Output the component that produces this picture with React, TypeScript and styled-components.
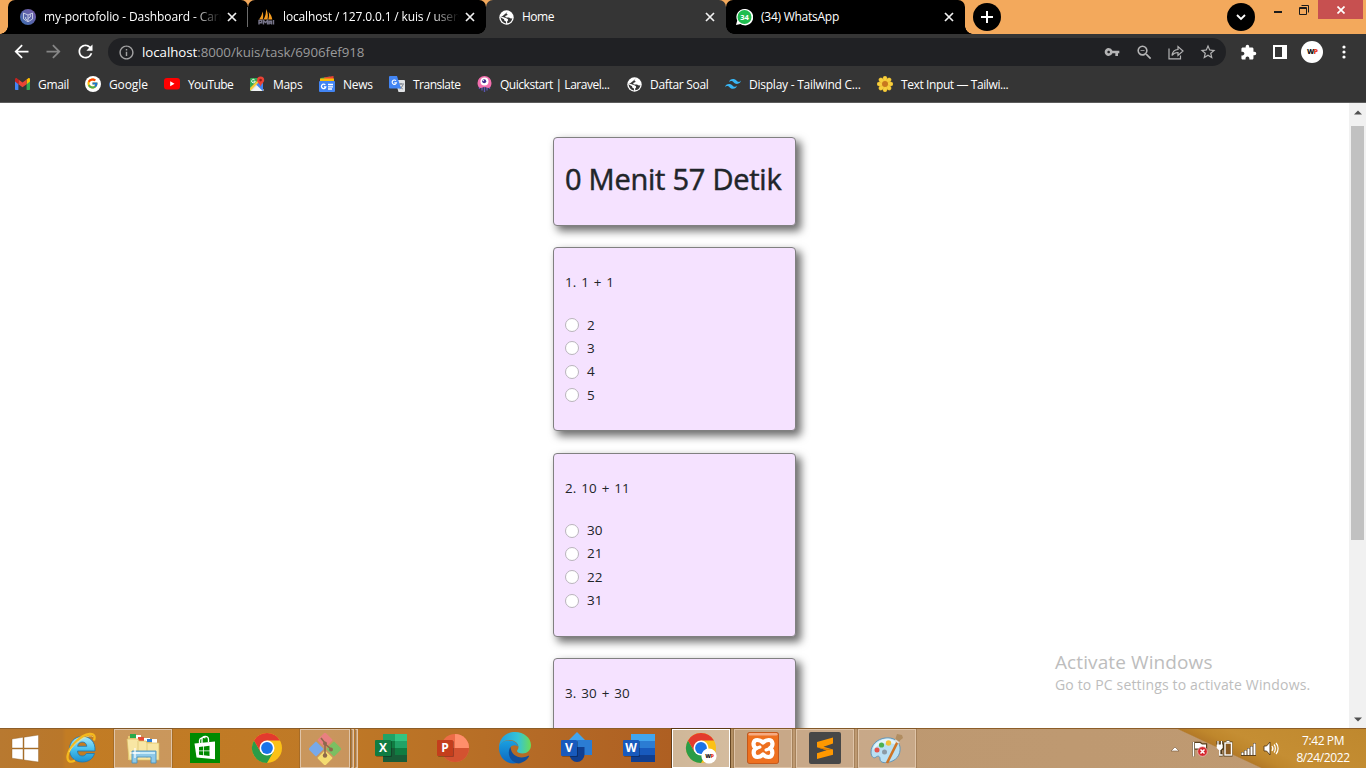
import React from 'react';
import styled, { createGlobalStyle } from 'styled-components';
import { MdArrowBack, MdArrowForward, MdRefresh, MdInfoOutline, MdVpnKey, MdZoomOut, MdStarBorder, MdExtension } from 'react-icons/md';
import { FcGoogle } from 'react-icons/fc';

const GlobalStyle = createGlobalStyle`
  * { box-sizing: border-box; }
  html, body { margin: 0; padding: 0; overflow: hidden; }
  body { font-family: "Open Sans", "Noto Sans", sans-serif; }
  svg { display: block; flex: none; }
`;

const Screen = styled.div`
  width: 1366px;
  height: 768px;
  display: flex;
  flex-direction: column;
  overflow: hidden;
  background: #fff;
`;

/* ---------- tab strip ---------- */
const TabStrip = styled.div`
  height: 34px;
  flex: none;
  display: flex;
  padding-left: 8px;
  background: #f3a95c;
`;

const Tab = styled.div<{ $active?: boolean; $width: number; $start?: number }>`
  position: relative;
  width: ${p => p.$width}px;
  height: 34px;
  display: flex;
  align-items: center;
  padding: 0 11px 0 ${p => p.$start ?? 12}px;
  border-radius: 7px 7px 0 0;
  color: #fff;
  background: ${p => (p.$active ? '#353535' : '#000')};
`;

const Flare = styled.span<{ $side: 'left' | 'right'; $color: string }>`
  position: absolute;
  bottom: 0;
  ${p => p.$side}: -8px;
  width: 8px;
  height: 8px;
  background: radial-gradient(circle at ${p => (p.$side === 'left' ? '0 0' : '100% 0')}, transparent 7.5px, ${p => p.$color} 8px);
  z-index: 1;
`;

const TabDivider = styled.span`
  position: absolute;
  right: 0;
  top: 7px;
  width: 1px;
  height: 20px;
  background: #6b6b6b;
`;

const TabTitle = styled.span<{ $fade?: boolean; $spacing?: number }>`
  flex: 1;
  margin-left: 8px;
  margin-right: 6px;
  overflow: hidden;
  white-space: nowrap;
  font-size: 12px;
  line-height: 18px;
  letter-spacing: ${p => p.$spacing ?? 0}px;
  ${p => p.$fade && 'mask-image: linear-gradient(to right, #000 calc(100% - 28px), transparent);'}
`;

const RoundButton = styled.div<{ $left: number }>`
  width: 28px;
  height: 28px;
  margin: 3px 0 0 ${p => p.$left}px;
  border-radius: 50%;
  background: #000;
  display: flex;
  align-items: center;
  justify-content: center;
`;

const WindowButtons = styled.div`
  display: flex;
  margin-left: 6px;
  height: 19px;
`;

const WindowButton = styled.div<{ $width: number; $close?: boolean }>`
  width: ${p => p.$width}px;
  height: 19px;
  display: flex;
  align-items: center;
  justify-content: center;
  background: ${p => (p.$close ? '#c75050' : 'transparent')};
`;

const RestoreButton = styled(WindowButton)`
  padding-right: 5px;
`;

/* ---------- toolbar ---------- */
const Toolbar = styled.div`
  height: 36px;
  flex: none;
  display: flex;
  align-items: center;
  background: #353535;
`;

const ToolSlot = styled.div<{ $width?: number; $color?: string }>`
  width: ${p => p.$width ?? 32}px;
  height: 28px;
  display: flex;
  align-items: center;
  justify-content: center;
  color: ${p => p.$color ?? '#fff'};
`;

const NavGroup = styled.div`
  display: flex;
  width: 108px;
  padding: 0 0 1px 5.5px;
`;

const Omnibox = styled.div`
  width: 1118px;
  height: 28px;
  display: flex;
  align-items: center;
  padding: 0 2px 0 2px;
  border-radius: 14px;
  background: #202124;
`;

const Address = styled.div`
  flex: 1;
  font-size: 13.3px;
  line-height: 20px;
  letter-spacing: -0.05px;
  color: #9a9a9b;
  b { font-weight: 400; color: #fff; }
`;

const Avatar = styled.div`
  width: 22px;
  height: 22px;
  border-radius: 50%;
  background: #fff;
  display: flex;
  align-items: center;
  justify-content: center;
  font: 800 7px/10px "Open Sans", sans-serif;
  letter-spacing: -0.8px;
  color: #111;
  i { font-style: normal; color: #e8401f; }
`;

/* ---------- bookmarks ---------- */
const Bookmarks = styled.div`
  height: 33px;
  flex: none;
  display: flex;
  align-items: flex-start;
  padding: 5px 0 0 15px;
  background: #353535;
  border-bottom: 1px solid #5c5c5c;
`;

const Bookmark = styled.div<{ $width: number; $spacing?: number }>`
  width: ${p => p.$width}px;
  height: 18px;
  display: flex;
  align-items: center;
  gap: 8px;
  white-space: nowrap;
  font-size: 12px;
  letter-spacing: ${p => p.$spacing ?? -0.1}px;
  color: #fff;
`;

/* ---------- page ---------- */
const PageRow = styled.div`
  position: relative;
  height: 625px;
  flex: none;
  display: flex;
`;

const Page = styled.main`
  flex: 1;
  height: 625px;
  overflow: hidden;
  display: flex;
  flex-direction: column;
  align-items: center;
  gap: 21.6px;
  padding-top: 34.2px;
  color: #212529;
`;

const Card = styled.section<{ $height: number }>`
  width: 243px;
  height: ${p => p.$height}px;
  flex: none;
  padding: 0 11px;
  background: #f5e2ff;
  border: 1px solid #808080;
  border-radius: 4px;
  box-shadow: 4.5px 4.5px 9px #6c6c6c;
`;

const Timer = styled.h1`
  margin: 22px 0 0;
  font-weight: 500;
  font-size: 29px;
  line-height: 38px;
  white-space: nowrap;
  letter-spacing: -0.25px;
  -webkit-text-stroke: 0.5px #212529;
`;

const Question = styled.p`
  margin: 24px 0 20px;
  font-size: 13.4px;
  line-height: 21px;
  letter-spacing: 0.2px;
  word-spacing: 1px;
`;

const Option = styled.label`
  height: 23.35px;
  display: flex;
  align-items: center;
  gap: 8px;
  font-size: 13.5px;
  line-height: 21px;
`;

const Radio = styled.span`
  width: 14px;
  height: 14px;
  border: 1px solid #b9b4bc;
  border-radius: 50%;
  background: #fff;
`;

const Scrollbar = styled.div`
  width: 17px;
  height: 625px;
  display: flex;
  flex-direction: column;
  align-items: center;
  justify-content: space-between;
  padding: 7px 0 6px;
  background: #f1f1f1;
`;

const Thumb = styled.div`
  width: 13px;
  height: 414px;
  margin: 11px 0 auto;
  background: #c1c1c1;
`;

const Watermark = styled.div`
  position: absolute;
  left: 1055px;
  top: 546px;
  white-space: nowrap;
  color: #bdbdbd;
  font-size: 14px;
  line-height: 19px;
  letter-spacing: 0.16px;
`;

const WatermarkTitle = styled.div`
  font-size: 19px;
  line-height: 26px;
  letter-spacing: 0.1px;
`;

/* ---------- taskbar ---------- */
const Taskbar = styled.footer`
  height: 40px;
  flex: none;
  display: flex;
  border-top: 1px solid #8d5e29;
  background:
    linear-gradient(25deg, transparent 0, transparent 31.5%, #b47a28 32.5%, #bf872c 40%, #c58e33 50%, #bf882e 100%) 1175px 0 / 191px 40px no-repeat,
    linear-gradient(90deg, #b87930 0, #b9772a 62px, #c27c24 66px, #bf7926 330px, #b46a26 540px, #ae5f22 671px, #a98553 672px, #bd9870 780px, #bf9a72 1366px);
`;

const StartSlot = styled.div`
  width: 50px;
  display: flex;
  align-items: center;
  justify-content: center;
  padding-right: 1px;
`;

const TaskSlot = styled.div<{ $state?: 'open' | 'active' }>`
  width: 58px;
  height: 39px;
  margin: 0 2px;
  padding-bottom: 1px;
  display: flex;
  align-items: center;
  justify-content: center;
  border: 1px solid transparent;
  ${p => p.$state === 'open' && 'background: rgba(214,190,170,.42); border-color: #dfc4a8; box-shadow: 0 0 0 1px rgba(110,75,40,.3);'}
  ${p => p.$state === 'active' && 'background: rgba(233,216,198,.6); border-color: #fff; box-shadow: 0 0 0 1px rgba(70,40,10,.7);'}
`;

const GroupedSlot = styled.div`
  width: 62px;
  display: flex;
  gap: 1px;
  padding: 0 1px 0 2px;
`;

const GroupLead = styled.div`
  width: 50px;
  height: 39px;
  display: flex;
  align-items: center;
  justify-content: center;
  border: 1px solid #dfc4a8;
  background: rgba(214,190,170,.42);
  box-shadow: 0 0 0 1px rgba(110,75,40,.3);
`;

const GroupEdge = styled.div`
  width: 3px;
  height: 39px;
  border: 1px solid #dfc4a8;
  border-left-color: #a07b50;
  background: #c89d70;
`;

const Tray = styled.div`
  margin-left: auto;
  display: flex;
  align-items: center;
`;

const TraySlot = styled.div<{ $width: number }>`
  width: ${p => p.$width}px;
  display: flex;
  justify-content: center;
`;

const Clock = styled.div`
  width: 83px;
  padding: 1px 3px 0 0;
  text-align: center;
  color: #fff;
  font-size: 12px;
  line-height: 17px;
  letter-spacing: -0.4px;
`;

/* ---------- icons ---------- */
const CloseIcon = () => (
  <svg width="10" height="10" viewBox="0 0 10 10"><path d="M1 1l8 8M9 1L1 9" stroke="#f1f1f1" strokeWidth="1.7" /></svg>
);

const GlobeIcon = () => (
  <svg width="15" height="15" viewBox="0 0 15 15">
    <circle cx="7.5" cy="7.5" r="7.2" fill="#fff" />
    <path d="M8.7 1.7c-1.2.3-1.7 1-1.2 1.9.4.6 1.1.5 1 1.2-.3 1-1.8.5-2.2 1.500-.2.8.4 1.200 1.300 1.200h2.200c1 0 1.400.8 2.100.9.8.1 1.300-.4 1.400-1 .2 2.900-2 5.600-5 5.800l-.2-1.400c0-.7 1.100-.8 1-1.900-.1-1.400-1.500-1.300-2.500-1.900C5.500 7.400 4.600 7.100 1.700 6.700 1.300 10 4 13.300 7.200 13.400l-.4-2.200c-1.500-.1-1.700-1.100-1.700-2L1.800 7.500" fill="#353535" />
  </svg>
);

const PortfolioIcon = () => (
  <svg width="16" height="16" viewBox="0 0 16 16">
    <defs><linearGradient id="pf" x1="1" x2="0" y2="1"><stop stopColor="#7b5aa8" /><stop offset="1" stopColor="#3a6eae" /></linearGradient></defs>
    <circle cx="8" cy="8" r="8" fill="url(#pf)" />
    <path d="M3.500 4l4.500 2 4.500-2v6L8 12.800 3.500 10zM8 6v6.500M5.700 8v2l2.300 1.500M10.300 5v3L8 9.500" fill="none" stroke="#c5cbe3" strokeWidth="1" />
  </svg>
);

const PmaIcon = () => (
  <svg width="17" height="16" viewBox="0 0 17 16">
    <path d="M1 10.500C3 8 4 5.500 4.500 2.500c1 2.500.8 5.500.3 8zM5.500 10.500C7.500 7 8.200 4 8 0c2.200 3.500 2.200 7.500 1.500 10.500zM10.200 10.500c1-2.800 1-5 .5-7.500 2.300 2.500 3.300 5 3.600 7.500z" fill="#f29a1f" />
    <path d="M1 15.500v-4h2.700v2.200H1M5.500 15.500v-4l2 2 2-2v4M11 15.500v-3.200h2.500v3.200M11 14H13.500M15.500 11v4.500" fill="none" stroke="#77758a" strokeWidth="1.400" />
  </svg>
);

const WhatsappIcon = () => (
  <svg width="17" height="17" viewBox="0 0 17 17">
    <path d="M8.500 0A8 8 0 0 0 1.200 11.500L0 16l4.500-1A8.200 8.200 0 1 0 8.500 0z" fill="#fff" />
    <circle cx="8.500" cy="8" r="7" fill="#1fbd4f" />
    <text x="8.500" y="10.800" textAnchor="middle" fontFamily="Open Sans" fontSize="7.500" fontWeight="700" fill="#fff">34</text>
  </svg>
);

const GmailIcon = () => (
  <svg width="15" height="12" viewBox="0 0 15 12">
    <path d="M0 2v9c0 .6.400 1 1 1h2.400V5z" fill="#4285f4" />
    <path d="M15 2v9c0 .6-.4 1-1 1h-2.400V5z" fill="#34a853" />
    <path d="M11.600 1.400L13 .4c.9-.7 2-.1 2 1v2.200l-3.400 2.600z" fill="#fbbc04" />
    <path d="M3.400 1.400L7.500 4.500l4.100-3.100v4.800L7.500 9.200 3.400 6.200z" fill="#ea4335" />
    <path d="M0 1.500C0 .300 1.200-.3 2.100.4l1.300 1v4.800L0 3.600z" fill="#c5221f" />
  </svg>
);

const GoogleIcon = () => (
  <svg width="16" height="16" viewBox="0 0 16 16">
    <circle cx="8" cy="8" r="8" fill="#fff" />
    <FcGoogle x="1.500" y="1.500" width="13" height="13" />
  </svg>
);

const YoutubeIcon = () => (
  <svg width="16" height="12" viewBox="0 0 16 12"><rect width="16" height="11.600" rx="3" fill="#f00" /><path d="M6.200 3.300v5l4.300-2.500z" fill="#fff" /></svg>
);

const MapsIcon = () => (
  <svg width="16" height="16" viewBox="0 0 16 16">
    <rect x="1" y="2" width="13" height="13" rx="1.300" fill="#34a853" />
    <path d="M1 13.700L8 7l7 7-1 1H2.300z" fill="#dfe3e6" />
    <path d="M7 8.500L13.700 15H14V7.500L11 5z" fill="#4285f4" />
    <path d="M1 12L9 4l1.500 1.500L1.500 14.700z" fill="#fcc934" />
    <path d="M2.800 15L8 9.700l5.200 5.300z" fill="#f1f3f4" />
    <path d="M6.300 5.200A1.800 1.800 0 1 1 5.500 3.600M4.500 5.200h1.800" stroke="#fff" fill="none" strokeWidth=".9" />
    <path d="M11.600.5a3.600 3.600 0 0 0-3.600 3.600c0 2.600 3 3.600 3.600 6.900.6-3.300 3.600-4.300 3.600-6.900A3.600 3.600 0 0 0 11.600.5z" fill="#ea4335" />
    <circle cx="11.600" cy="4.100" r="1.300" fill="#8c1d18" />
  </svg>
);

const NewsIcon = () => (
  <svg width="16" height="16" viewBox="0 0 16 16">
    <path d="M1.500 2L11 .5l1 4H2z" fill="#34a853" /><path d="M5 1.500L14.500 0v5H6z" fill="#ea4335" />
    <rect x="1" y="2.500" width="14" height="6" fill="#fbbc04" />
    <rect y="5" width="16" height="11" rx="1" fill="#4285f4" />
    <path d="M6.300 8.900a2.200 2.200 0 1 0 .5 1.900H4.900M9 8.500h5M9 10.800h5M9 13h4" fill="none" stroke="#fff" strokeWidth="1.300" />
  </svg>
);

const TranslateIcon = () => (
  <svg width="16" height="16" viewBox="0 0 16 16">
    <path d="M6 4h9a1 1 0 0 1 1 1v10a1 1 0 0 1-1 1H9.500z" fill="#e0e2e5" />
    <path d="M9 8h6M12 7v1.500M14 8.500c-.5 2-2 3.500-3.500 4.300M10.500 10c.8 1.300 2 2.300 3.300 3" stroke="#6d7580" fill="none" strokeWidth=".9" />
    <path d="M1 0h7l4 12.500H1a1 1 0 0 1-1-1V1a1 1 0 0 1 1-1z" fill="#4285f4" />
    <path d="M7 4.700a2.200 2.200 0 1 0 .5 2H5.300" fill="none" stroke="#fff" strokeWidth="1.100" />
  </svg>
);

const QuickstartIcon = () => (
  <svg width="15" height="16" viewBox="0 0 15 16">
    <path d="M2.500 9v4M5 10v4.500M7.500 10v6M10 10v4.500M12.500 9v4" stroke="#5a55b0" strokeWidth="1.400" />
    <path d="M7.500 0a7 7 0 0 1 7 7c0 3-1.500 5-3.500 5-1 0-1.500-1-3.500-1s-2.500 1-3.500 1C2 12 .5 10 .5 7a7 7 0 0 1 7-7z" fill="#f46fae" />
    <circle cx="7.500" cy="5.500" r="4" fill="#fff" /><circle cx="7.200" cy="5.300" r="2" fill="#3d2c8d" /><circle cx="6.500" cy="4.600" r=".6" fill="#fff" />
  </svg>
);

const TailwindIcon = () => (
  <svg width="16" height="10" viewBox="0 0 16 10">
    <path d="M4 3.300C4.500 1.100 5.900 0 8 0c3.200 0 3.600 2.400 5.200 2.800 1.100.3 2-.1 2.800-1.200-.5 2.200-1.900 3.300-4 3.300-3.200 0-3.600-2.400-5.200-2.800C5.700 1.800 4.800 2.200 4 3.300zM0 8.200C.5 6 1.900 4.900 4 4.900c3.200 0 3.600 2.400 5.200 2.800 1.100.3 2-.1 2.800-1.200-.5 2.200-1.900 3.300-4 3.300-3.200 0-3.600-2.400-5.200-2.800-1.100-.3-2 .1-2.800 1.200z" fill="#38b6f5" />
  </svg>
);

const FlowerIcon = () => (
  <svg width="16" height="16" viewBox="0 0 16 16">
    {[0, 45, 90, 135, 180, 225, 270, 315].map(a => (
      <ellipse key={a} cx="8" cy="3.200" rx="2.200" ry="3.200" fill="#f7cf3e" stroke="#d9a520" strokeWidth=".3" transform={`rotate(${a} 8 8)`} />
    ))}
    <circle cx="8" cy="8" r="3" fill="#c8781f" />
  </svg>
);

const ShareIcon = () => (
  <svg width="16" height="16" viewBox="0 0 16 16" fill="none" stroke="#b4b4b5" strokeWidth="1.200">
    <path d="M1 4.500v10.300h11.500v-3.300" /><path d="M4 11.500c.4-3.700 2.500-5.800 6-6V2.500L15 7l-5 4.500v-3c-2.600 0-4.500.8-6 3z" />
  </svg>
);

const StartIcon = () => (
  <svg width="28" height="28" viewBox="0 0 28 28" fill="#fff" stroke="#8a5a20" strokeWidth=".4">
    <path d="M1 4l11-1.700V13H1zM13 2.200L27.500 0v13H13zM1 14h11v10.800L1 23.200zM13 14h14.500v13L13 25z" />
  </svg>
);

const IeIcon = () => (
  <svg width="32" height="32" viewBox="0 0 32 32">
    <defs><linearGradient id="ie" x2="0" y2="1"><stop stopColor="#a9e8fb" /><stop offset=".5" stopColor="#48c1ee" /><stop offset="1" stopColor="#1b8fd0" /></linearGradient></defs>
    <path d="M30 19H12.500c.2 3.300 2 5 4.700 5 2 0 3.300-.9 4.200-2.500h8.100C27.700 26.800 23.600 30 17.300 30 9.800 30 4.500 25 4.500 17.500S9.700 4.500 17.300 4.500C25 4.500 30.600 9.500 30 19zM12.600 14.300h9.200c-.2-2.700-1.900-4.300-4.500-4.300s-4.300 1.600-4.700 4.300z" fill="url(#ie)" stroke="#1976b5" strokeWidth=".8" />
    <path d="M29 8.500C30.500 4 29 1.500 24.500 2 16 3 5.500 13 3 22c-1.800 6.500 1.500 9.500 7 6.500" fill="none" stroke="#f5b91d" strokeWidth="2.300" />
    <path d="M28 5C26 .8 10 9 4 20" fill="none" stroke="#ffe27a" strokeWidth=".8" />
  </svg>
);

const ExplorerIcon = () => (
  <svg width="34" height="32" viewBox="0 0 34 32">
    <path d="M2 4h10l2 2h6l1 3h10v19H2z" fill="#e8c872" />
    <path d="M4 2h6v4H4z" fill="#28a94b" /><path d="M10 3h5v4h-5z" fill="#fff" />
    <path d="M12 5h6v4h-6z" fill="#e64b34" /><path d="M18 6h6v3h-6z" fill="#fff" />
    <path d="M21 7h5v3h-5z" fill="#2c7ed6" /><path d="M26 7h5v4h-5z" fill="#fff" />
    <path d="M1 7h11l1 2h7l1 2h12v17H3z" fill="#f8e6a4" stroke="#d9bb62" strokeWidth=".7" />
    <path d="M12 9v17M21 11v15" stroke="#e2cb7b" />
    <path d="M6 19h24v12h-5v-6H11v6H6z" fill="#8ec9e8" stroke="#4d93bd" strokeWidth=".9" />
    <path d="M7 20h22v2H7z" fill="#c8ebf8" /><path d="M9 16v10M4 21h10" stroke="#fff" strokeWidth="1.200" />
  </svg>
);

const StoreIcon = () => (
  <svg width="30" height="30" viewBox="0 0 30 30">
    <rect width="30" height="30" fill="#008a00" />
    <path d="M4.500 10.500L25 8.500v17.800L6.500 24.500z" fill="#fff" />
    <path d="M9.500 10V7.500c0-2.500 4-4 6-2.500M12 10V6.500c0-4 6.500-4.500 6.500 0V9" fill="none" stroke="#fff" strokeWidth="1.300" />
    <path d="M9 14l4.200-.5v4H9zM14 13.400l5.500-.6v4.700H14zM9 18.200h4.200v4L9 21.700zM14 18.200h5.500V23l-5.500-.7z" fill="#008a00" />
  </svg>
);

const ChromeIcon = ({ badge }: { badge?: boolean }) => (
  <svg width="32" height="32" viewBox="0 0 32 32">
    <circle cx="16" cy="16" r="15" fill="#fbc116" />
    <path d="M3 8.500a15 15 0 0 0 13 22.500l6.500-11.300L9.500 19.700z" fill="#2a9c48" />
    <path d="M3 8.500A15 15 0 0 1 29 8.500H16L9.500 19.700z" fill="#e33b2e" />
    <circle cx="16" cy="16" r="7.500" fill="#fff" /><circle cx="16" cy="16" r="5.900" fill="#1a73e8" />
    {badge && <>
      <circle cx="24" cy="24" r="7.600" fill="#fff" />
      <text x="20.200" y="26.200" fontFamily="Open Sans" fontSize="5.500" fontWeight="800" fill="#111" letterSpacing="-.5">W<tspan fill="#e8401f">P</tspan></text>
    </>}
  </svg>
);

const GitIcon = () => (
  <svg width="32" height="32" viewBox="0 0 32 32">
    <rect x="10.500" y="1.500" width="11" height="11" rx="1" transform="rotate(45 16 7)" fill="#e98080" />
    <rect x="1.500" y="10.500" width="11" height="11" rx="1" transform="rotate(45 7 16)" fill="#78a9ea" />
    <rect x="19.500" y="10.500" width="11" height="11" rx="1" transform="rotate(45 25 16)" fill="#7bbf62" />
    <rect x="10.500" y="19.500" width="11" height="11" rx="1" transform="rotate(45 16 25)" fill="#f4dc70" />
    <path d="M12 5l4 5v14M16 11l6 5" stroke="#8e684b" strokeWidth="1.600" fill="none" />
    <circle cx="16" cy="10.500" r="2" fill="#8e684b" /><circle cx="22" cy="16.500" r="2" fill="#8e684b" /><circle cx="16" cy="22.500" r="2.200" fill="#8e684b" />
  </svg>
);

const OfficeBadge = ({ letter, color }: { letter: string; color: string }) => (
  <>
    <rect x="1" y="9" width="16" height="16" rx="1" fill="#000" opacity=".25" />
    <rect y="8" width="16" height="16" rx="1" fill={color} />
    <text x="8" y="20.300" textAnchor="middle" fontFamily="Open Sans" fontSize="12" fontWeight="700" fill="#fff">{letter}</text>
  </>
);

const ExcelIcon = () => (
  <svg width="32" height="32" viewBox="0 0 32 32">
    <path d="M8 2h12v7H8z" fill="#21a366" /><path d="M20 2h12v7H20z" fill="#33c481" />
    <path d="M8 9h12v7H8z" fill="#107c41" /><path d="M20 9h12v7H20z" fill="#21a366" />
    <path d="M8 16h12v7H8z" fill="#185c37" /><path d="M20 16h12v7H20z" fill="#107c41" /><path d="M8 23h24v7H8z" fill="#185c37" />
    <OfficeBadge letter="X" color="#107c41" />
  </svg>
);

const PowerpointIcon = () => (
  <svg width="32" height="32" viewBox="0 0 32 32">
    <circle cx="18" cy="16" r="14" fill="#ed6c47" /><path d="M18 2a14 14 0 0 1 14 14H18z" fill="#ff8f6b" /><path d="M4 16a14 14 0 0 0 28 0z" fill="#d35230" />
    <OfficeBadge letter="P" color="#c43e1c" />
  </svg>
);

const VisioIcon = () => (
  <svg width="32" height="32" viewBox="0 0 32 32">
    <path d="M16 0l8 8-8 8-8-8z" fill="#41a5ee" /><rect x="16" y="8" width="15" height="15" fill="#2b7cd3" />
    <path d="M16 15h7.500v7.500a7.500 7.500 0 1 1-7.500-7.500z" fill="#103f91" />
    <OfficeBadge letter="V" color="#185abd" />
  </svg>
);

const WordIcon = () => (
  <svg width="32" height="32" viewBox="0 0 32 32">
    <path d="M8 2h24v7H8z" fill="#41a5ee" /><path d="M8 9h24v7H8z" fill="#2b7cd3" /><path d="M8 16h24v7H8z" fill="#185abd" /><path d="M8 23h24v7H8z" fill="#103f91" />
    <OfficeBadge letter="W" color="#185abd" />
  </svg>
);

const EdgeIcon = () => (
  <svg width="32" height="32" viewBox="0 0 32 32">
    <defs>
      <linearGradient id="e1" x2="1"><stop stopColor="#1f9de0" /><stop offset=".6" stopColor="#35c4d7" /><stop offset="1" stopColor="#6bdc55" /></linearGradient>
      <linearGradient id="e2" x2="0" y2="1"><stop stopColor="#1aa0e0" /><stop offset="1" stopColor="#0d67c0" /></linearGradient>
    </defs>
    <path d="M0 16C0 6 7 0 16 0s16 6 16 13c0 5.500-4 8.500-8.500 8.500-3 0-5.500-1-5.500-2.500 0-1 1.500-1.500 1.500-4C19.500 11 15 8 11 8 5 8 1 11 0 16z" fill="url(#e1)" />
    <path d="M0 16c0-5 5-7.500 10-7.500 5.500 0 9 3 9.300 6.500-1-2-6-3-8 .5-3 5-.5 12 7.200 15.500C8 33.500 0 26 0 16z" fill="url(#e2)" />
    <path d="M11.500 15c-4 6-1 15 8 16.500 5-.7 8.500-3.500 10.500-7 .3-.8-.2-1-.8-.7-8 4-17 .2-17.700-8.800z" fill="#114f9c" />
  </svg>
);

const XamppIcon = () => (
  <svg width="32" height="32" viewBox="0 0 32 32">
    <rect width="32" height="32" rx="3" fill="#b9521a" />
    <rect x=".8" y=".8" width="30.400" height="30.400" rx="2.500" fill="#ee701f" />
    <rect x="1.500" y="1" width="29" height="2.500" rx="1.200" fill="#f5ab84" />
    <path d="M16 10.500Q13.500 8 10.500 8C5.500 8 5.500 14 9 16.300 5.500 18.500 6 25 10.500 25Q13.500 25 16 22.500 18.500 25 21.500 25C26 25 26.500 18.500 23 16.300 26.500 14 26.500 8 21.500 8Q18.500 8 16 10.500z" fill="none" stroke="#fff" strokeWidth="4.200" strokeLinejoin="round" />
    <path d="M9 16.500l4-1.500M19 18l4-1.500" stroke="#fff" strokeWidth="3" strokeLinecap="round" />
  </svg>
);

const SublimeIcon = () => (
  <svg width="32" height="32" viewBox="0 0 32 32">
    <rect width="32" height="32" rx="2" fill="#474747" />
    <path d="M24 5.500v6L14.500 14.700 24 17.500v5.300L8 27v-5.700l9.500-3.100L8 15.300V10z" fill="#ff9800" />
    <path d="M8 15.300L24 17.500l-6.500.7z" fill="#d97a00" />
  </svg>
);

const PaintIcon = () => (
  <svg width="34" height="32" viewBox="0 0 34 32">
    <path d="M15 6C7 7 1 13 1 20c0 5 3 7 5 5 2-1.500 4-1 4 2 0 3 3 4 7 3.500C26 29.500 31 23 30 15 29 8.500 23 5 15 6z" fill="#b9e0f3" stroke="#6595b5" />
    <path d="M15 7C9 8 3 13 3 18c4-6 15-9 25-5-2-4-7-7-13-6z" fill="#e3f4fb" />
    <circle cx="7" cy="18" r="2.500" fill="#e5534b" /><circle cx="11.500" cy="13" r="2.600" fill="#4cb050" /><circle cx="18.500" cy="11" r="2.700" fill="#f3c13a" />
    <circle cx="14.500" cy="20" r="2.500" fill="#8b9ba5" />
    <path d="M29 7L17 31" stroke="#ce7526" strokeWidth="2.700" />
    <path d="M25 8l2-6 5 1 1 3-5 4z" fill="#b18d61" /><path d="M25 8l4 3" stroke="#ddd" strokeWidth="2" />
  </svg>
);

const FlagIcon = () => (
  <svg width="18" height="16" viewBox="0 0 18 16">
    <path d="M2.500 1v14.500M4 2h5l2 1.500h4V9h-4L9 7.500H4z" fill="#fff" stroke="#59401e" strokeWidth="2.400" /><path d="M2.500 1v14.500" stroke="#fff" strokeWidth="1.500" /><path d="M4 2h5l2 1.500h4V9h-4L9 7.500H4z" fill="#fff" />
    <circle cx="11.500" cy="10.500" r="4.800" fill="#d4252b" stroke="#f6c6c6" strokeWidth=".7" /><path d="M9.500 8.500l4 4M13.500 8.500l-4 4" stroke="#fff" strokeWidth="1.500" />
  </svg>
);

const PowerIcon = () => (
  <svg width="17" height="17" viewBox="0 0 17 17">
    <path d="M2 1v4M5.500 1v4M.7 5h6v3l-2 2v5h2M9 3h6v12H9zM10.500 1.500h3" fill="none" stroke="#4d3819" strokeWidth="3" />
    <path d="M2 1v4M5.500 1v4M3.700 9v6h3M10.500 1.500h3" fill="none" stroke="#fff" strokeWidth="1.300" />
    <path d="M.7 4.500h6V8l-2 2h-2l-2-2z" fill="#fff" /><rect x="9" y="3" width="6.500" height="12" fill="#8a5b23" stroke="#fff" strokeWidth="1.400" />
  </svg>
);

const SignalIcon = () => (
  <svg width="17" height="14" viewBox="0 0 17 14">
    <path d="M2.500 10v4M5.500 8v6M8.500 6v8M11.500 4v10M14.500 1v13" stroke="#5b401e" strokeWidth="3" /><path d="M2.500 10.500V13M5.500 8.500V13M8.500 6.500V13M11.500 4.500V13M14.500 1.500V13" stroke="#fff" strokeWidth="2" />
  </svg>
);

const SpeakerIcon = () => (
  <svg width="17" height="15" viewBox="0 0 17 15">
    <path d="M1 5h2.500L7 1v13l-3.500-4H1z" fill="#fff" stroke="#553b19" strokeWidth=".9" />
    <path d="M9 5c1 1.300 1 3.700 0 5M11 3.500c1.800 2 1.800 6 0 8M13 2c2.800 3 2.800 8 0 11" fill="none" stroke="#fff" strokeWidth="1.200" />
  </svg>
);

const questions = [
  { id: 1, text: '1 + 1', options: ['2', '3', '4', '5'] },
  { id: 2, text: '10 + 11', options: ['30', '21', '22', '31'] },
  { id: 3, text: '30 + 30', options: [] as string[] },
];

const bookmarks = [
  { label: 'Gmail', icon: <GmailIcon />, width: 70, spacing: -0.3 },
  { label: 'Google', icon: <GoogleIcon />, width: 79, spacing: -0.1 },
  { label: 'YouTube', icon: <YoutubeIcon />, width: 85, spacing: -0.6 },
  { label: 'Maps', icon: <MapsIcon />, width: 70, spacing: -0.3 },
  { label: 'News', icon: <NewsIcon />, width: 70, spacing: -0.3 },
  { label: 'Translate', icon: <TranslateIcon />, width: 88, spacing: -0.5 },
  { label: 'Quickstart | Laravel...', icon: <QuickstartIcon />, width: 150, spacing: -0.47 },
  { label: 'Daftar Soal', icon: <GlobeIcon />, width: 98, spacing: -0.3 },
  { label: 'Display - Tailwind C...', icon: <TailwindIcon />, width: 152, spacing: -0.24 },
  { label: 'Text Input — Tailwi...', icon: <FlowerIcon />, width: 150, spacing: -0.4 },
];

export default function App() {
  return (
    <Screen>
      <GlobalStyle />
      <TabStrip>
        <Tab $width={240}>
          <Flare $side="left" $color="#000" />
          <PortfolioIcon /><TabTitle $fade $spacing={-0.1}>my-portofolio - Dashboard - Carrd</TabTitle><CloseIcon /><TabDivider />
        </Tab>
        <Tab $width={238} $start={10}>
          <PmaIcon /><TabTitle $fade $spacing={-0.15}>localhost / 127.0.0.1 / kuis / users</TabTitle><CloseIcon />
        </Tab>
        <Tab $active $width={240} $start={13}>
          <Flare $side="left" $color="#353535" />
          <GlobeIcon /><TabTitle $spacing={-0.5}>Home</TabTitle><CloseIcon />
          <Flare $side="right" $color="#353535" />
        </Tab>
        <Tab $width={239} $start={10}>
          <WhatsappIcon /><TabTitle $spacing={-0.25}>(34) WhatsApp</TabTitle><CloseIcon />
          <Flare $side="right" $color="#000" />
        </Tab>
        <RoundButton $left={8}><svg width="12" height="12" viewBox="0 0 12 12"><path d="M6 0v12M0 6h12" stroke="#fff" strokeWidth="2" /></svg></RoundButton>
        <RoundButton $left={226}><svg width="10" height="7" viewBox="0 0 10 7"><path d="M1 1l4 4 4-4" fill="none" stroke="#fff" strokeWidth="1.800" /></svg></RoundButton>
        <WindowButtons>
          <WindowButton $width={34}><svg width="8" height="8" viewBox="0 0 8 8"><path d="M0 6h8" stroke="#1b1b1b" strokeWidth="2" /></svg></WindowButton>
          <RestoreButton $width={23}><svg width="10" height="10" viewBox="0 0 10 10"><path d="M.5 2.500h7v7h-7zM.5 3.500h7M2.500.5h7v7" fill="none" stroke="#1b1b1b" /></svg></RestoreButton>
          <WindowButton $width={45} $close><svg width="8" height="8" viewBox="0 0 8 8"><path d="M.5.5l7 7M7.500.5l-7 7" stroke="#fff" strokeWidth="1.700" /></svg></WindowButton>
        </WindowButtons>
      </TabStrip>

      <Toolbar>
        <NavGroup>
          <ToolSlot><MdArrowBack size={21} /></ToolSlot>
          <ToolSlot $color="#868686"><MdArrowForward size={21} /></ToolSlot>
          <ToolSlot><MdRefresh size={21} /></ToolSlot>
        </NavGroup>
        <Omnibox>
          <ToolSlot $color="#a3a3a4"><MdInfoOutline size={17} /></ToolSlot>
          <Address><b>localhost</b>:8000/kuis/task/6906fef918</Address>
          <ToolSlot $color="#b4b4b5"><MdVpnKey size={16} /></ToolSlot>
          <ToolSlot $color="#b4b4b5"><MdZoomOut size={19} /></ToolSlot>
          <ToolSlot><ShareIcon /></ToolSlot>
          <ToolSlot $color="#b4b4b5"><MdStarBorder size={18} /></ToolSlot>
        </Omnibox>
        <ToolSlot $width={44}><MdExtension size={17} /></ToolSlot>
        <ToolSlot $width={20}><svg width="14" height="14" viewBox="0 0 14 14"><path fillRule="evenodd" d="M0 0h14v14H0zM2 2v10h7V2z" fill="#fff" /></svg></ToolSlot>
        <ToolSlot $width={44}><Avatar>W<i>P</i></Avatar></ToolSlot>
        <ToolSlot $width={20}><svg width="4" height="14" viewBox="0 0 4 14" fill="#fff"><circle cx="2" cy="2" r="1.600" /><circle cx="2" cy="7" r="1.600" /><circle cx="2" cy="12" r="1.600" /></svg></ToolSlot>
      </Toolbar>

      <Bookmarks>
        {bookmarks.map(b => <Bookmark key={b.label} $width={b.width} $spacing={b.spacing}>{b.icon}{b.label}</Bookmark>)}
      </Bookmarks>

      <PageRow>
        <Page>
          <Card $height={88.600}><Timer>0 Menit 57 Detik</Timer></Card>
          {questions.map(q => (
            <Card key={q.id} $height={183.900}>
              <Question>{q.id}. {q.text}</Question>
              {q.options.map(o => <Option key={o}><Radio />{o}</Option>)}
            </Card>
          ))}
        </Page>
        <Scrollbar>
          <svg width="8" height="5" viewBox="0 0 8 5"><path d="M0 4.500L4 .5l4 4z" fill="#505050" /></svg>
          <Thumb />
          <svg width="8" height="5" viewBox="0 0 8 5"><path d="M0 .5l4 4 4-4z" fill="#505050" /></svg>
        </Scrollbar>
        <Watermark><WatermarkTitle>Activate Windows</WatermarkTitle>Go to PC settings to activate Windows.</Watermark>
      </PageRow>

      <Taskbar>
        <StartSlot><StartIcon /></StartSlot>
        <TaskSlot><IeIcon /></TaskSlot>
        <TaskSlot $state="open"><ExplorerIcon /></TaskSlot>
        <TaskSlot><StoreIcon /></TaskSlot>
        <TaskSlot><ChromeIcon /></TaskSlot>
        <GroupedSlot><GroupLead><GitIcon /></GroupLead><GroupEdge /><GroupEdge /></GroupedSlot>
        <TaskSlot><ExcelIcon /></TaskSlot>
        <TaskSlot><PowerpointIcon /></TaskSlot>
        <TaskSlot><EdgeIcon /></TaskSlot>
        <TaskSlot><VisioIcon /></TaskSlot>
        <TaskSlot><WordIcon /></TaskSlot>
        <TaskSlot $state="active"><ChromeIcon badge /></TaskSlot>
        <TaskSlot $state="open"><XamppIcon /></TaskSlot>
        <TaskSlot $state="open"><SublimeIcon /></TaskSlot>
        <TaskSlot $state="open"><PaintIcon /></TaskSlot>
        <Tray>
          <TraySlot $width={24}><svg width="10" height="6" viewBox="0 0 10 6"><path d="M1 5l4-4 4 4z" fill="#fff" stroke="#75573a" strokeWidth=".6" /></svg></TraySlot>
          <TraySlot $width={25}><FlagIcon /></TraySlot>
          <TraySlot $width={24}><PowerIcon /></TraySlot>
          <TraySlot $width={24}><SignalIcon /></TraySlot>
          <TraySlot $width={23}><SpeakerIcon /></TraySlot>
          <Clock>7:42 PM<br />8/24/2022</Clock>
        </Tray>
      </Taskbar>
    </Screen>
  );
}
